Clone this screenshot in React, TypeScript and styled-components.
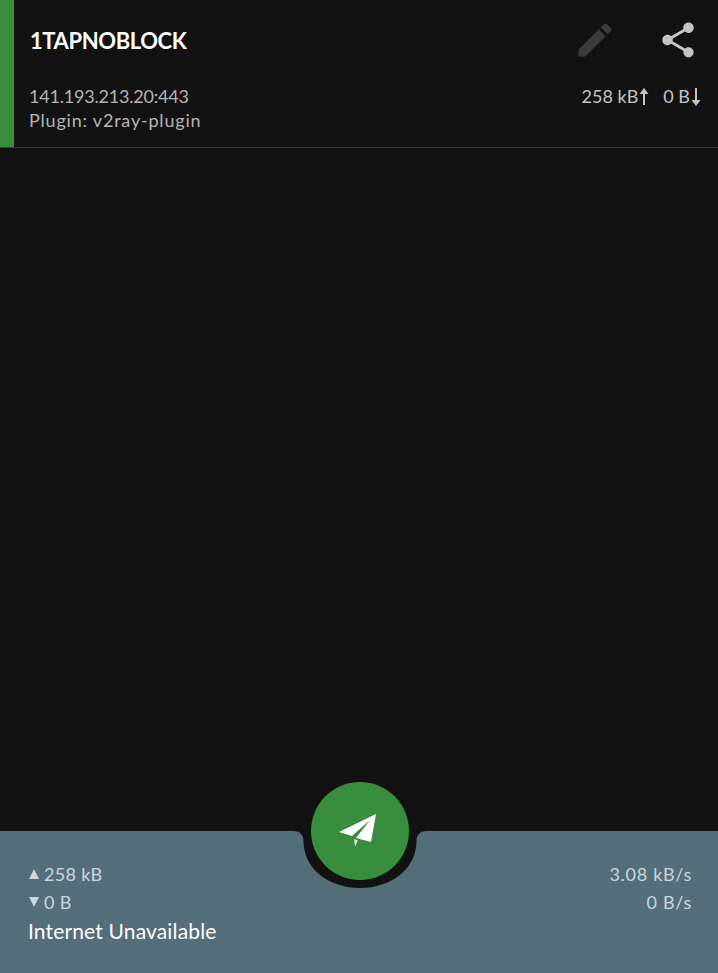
import styled, { createGlobalStyle } from 'styled-components';

const GlobalStyle = createGlobalStyle`
  html, body, #root {
    height: 100%;
  }
  body {
    margin: 0;
    background-color: #121212;
    font-family: Lato, "Open Sans", sans-serif;
  }
`;

const Page = styled.div`
  height: 100%;
  display: flex;
  flex-direction: column;
  background-color: #121212;
  overflow: hidden;
`;

const ProfileCard = styled.section`
  height: 147px;
  display: flex;
  border-bottom: 1px solid #3a3a3a;
`;

const ActiveStripe = styled.div`
  width: 14px;
  background-color: #388e3c;
`;

const CardBody = styled.div`
  flex: 1;
  display: flex;
  flex-direction: column;
  padding: 0 16px 0 15px;
`;

const TitleRow = styled.div`
  height: 80px;
  margin-bottom: 4px;
  display: flex;
  align-items: center;
  justify-content: space-between;
`;

const ProfileName = styled.h1`
  margin: 0 0 0 1px;
  font-size: 22px;
  font-weight: 700;
  letter-spacing: -0.4px;
  color: #ffffff;
`;

const Actions = styled.div`
  display: flex;
  align-items: center;
  gap: 40px;
  margin-right: 3px;
`;

const DetailsRow = styled.div`
  display: flex;
  justify-content: space-between;
  align-items: flex-start;
`;

const Address = styled.div`
  font-size: 18px;
  line-height: 24px;
  color: #b4b4b4;
`;

const AddressLine = styled.div<{ $tracking: number }>`
  letter-spacing: ${(props) => props.$tracking}px;
`;

const Traffic = styled.div`
  display: flex;
  gap: 13px;
  font-size: 18px;
  line-height: 24px;
  color: #c4c4c4;
`;

const TrafficItem = styled.span`
  display: inline-flex;
  align-items: center;
`;

const Spacer = styled.main`
  flex: 1;
`;

const StatsBar = styled.footer`
  position: relative;
  height: 142px;
  box-sizing: border-box;
  padding: 29px 26px 0 28px;
  display: flex;
  justify-content: space-between;
  align-items: flex-start;
  background-color: #546e7a;
`;

const Notch = styled.svg`
  position: absolute;
  left: 285px;
  top: 0;
`;

const ConnectButton = styled.button`
  position: absolute;
  left: 311px;
  top: -49px;
  width: 98px;
  height: 98px;
  padding: 0;
  border: none;
  border-radius: 50%;
  display: flex;
  align-items: center;
  justify-content: center;
  background-color: #388e3c;
`;

const StatColumn = styled.div<{ $right?: boolean }>`
  display: flex;
  flex-direction: column;
  align-items: ${(props) => (props.$right ? 'flex-end' : 'flex-start')};
`;

const StatLine = styled.div`
  display: flex;
  align-items: center;
  gap: 5px;
  height: 28px;
  font-size: 18px;
  letter-spacing: 0.3px;
  color: #c9d6dc;
`;

const RateLine = styled(StatLine)`
  letter-spacing: 0.7px;
`;

const Triangle = styled.span<{ $down?: boolean }>`
  width: 0;
  height: 0;
  margin-left: 1px;
  border-left: 5.5px solid transparent;
  border-right: 5.5px solid transparent;
  ${(props) =>
    props.$down ? 'border-top: 10px solid #c9d6dc;' : 'border-bottom: 10px solid #c9d6dc;'}
`;

const StatusText = styled.div`
  font-size: 21px;
  line-height: 30px;
  letter-spacing: 0.15px;
  color: #ffffff;
`;

const App = () => {
  return (
    <Page>
      <GlobalStyle />
      <ProfileCard>
        <ActiveStripe />
        <CardBody>
          <TitleRow>
            <ProfileName>1TAPNOBLOCK</ProfileName>
            <Actions>
              <svg width="44" height="44" viewBox="0 0 24 24" fill="#3b3b3b">
                <path d="M3 17.25V21h3.75L17.81 9.94l-3.75-3.75L3 17.25zM20.71 7.04a1 1 0 0 0 0-1.41l-2.34-2.34a1 1 0 0 0-1.41 0l-1.83 1.83 3.75 3.75 1.83-1.83z" />
              </svg>
              <svg width="42" height="42" viewBox="0 0 24 24" fill="#c4c4c4">
                <path d="M18 16.08c-.76 0-1.44.3-1.96.77L8.91 12.7c.05-.23.09-.46.09-.7s-.04-.47-.09-.7l7.05-4.11c.54.5 1.25.81 2.04.81 1.66 0 3-1.34 3-3s-1.34-3-3-3-3 1.34-3 3c0 .24.04.47.09.7L8.04 9.81C7.5 9.31 6.79 9 6 9c-1.66 0-3 1.34-3 3s1.34 3 3 3c.79 0 1.5-.31 2.04-.81l7.12 4.16c-.05.21-.08.43-.08.65 0 1.61 1.31 2.92 2.92 2.92s2.92-1.31 2.92-2.92-1.31-2.92-2.92-2.92z" />
              </svg>
            </Actions>
          </TitleRow>
          <DetailsRow>
            <Address>
              <AddressLine $tracking={-0.2}>141.193.213.20:443</AddressLine>
              <AddressLine $tracking={0.8}>Plugin: v2ray-plugin</AddressLine>
            </Address>
            <Traffic>
              <TrafficItem>
                258 kB
                <svg width="12" height="24" viewBox="0 0 12 24" fill="#c4c4c4">
                  <path d="M6 4l4.500 6H7v11H5V10H1.500z" />
                </svg>
              </TrafficItem>
              <TrafficItem>
                0 B
                <svg width="12" height="24" viewBox="0 0 12 24" fill="#c4c4c4">
                  <path d="M6 22l4.500-6H7V4H5v12H1.500z" />
                </svg>
              </TrafficItem>
            </Traffic>
          </DetailsRow>
        </CardBody>
      </ProfileCard>
      <Spacer />
      <StatsBar>
        <Notch width="150" height="70" viewBox="0 0 150 70" fill="#121212">
          <path d="M0 0H150V0H142C134 0 131.500 5 131.500 10C131.500 38 106 57 75 57C44 57 18.500 38 18.500 10C18.500 5 16 0 8 0z" />
        </Notch>
        <ConnectButton aria-label="Connect">
          <svg width="42" height="42" viewBox="0 0 42 42">
            <path fill="#ffffff" d="M37 4L0 22l13 4L31 10 17 28l15 4z" />
            <path fill="#dcedc8" d="M15 29l4 1.500-3 6z" />
          </svg>
        </ConnectButton>
        <StatColumn>
          <StatLine>
            <Triangle />
            258 kB
          </StatLine>
          <StatLine>
            <Triangle $down />
            0 B
          </StatLine>
          <StatusText>Internet Unavailable</StatusText>
        </StatColumn>
        <StatColumn $right>
          <RateLine>3.08 kB/s</RateLine>
          <RateLine>0 B/s</RateLine>
        </StatColumn>
      </StatsBar>
    </Page>
  );
};

export default App;
